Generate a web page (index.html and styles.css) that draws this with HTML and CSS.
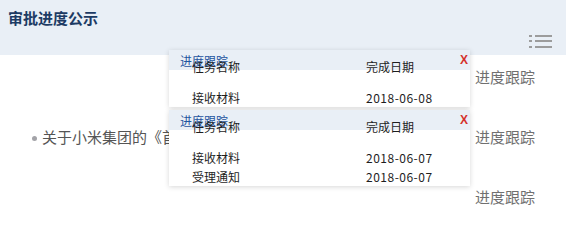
FILE: index.html
```html
<!DOCTYPE html>
<html lang="zh-CN">
<head>
<meta charset="utf-8">
<title>审批进度公示</title>
<link rel="stylesheet" href="styles.css">
</head>
<body>
<div class="page">
  <header class="top">
    <h1 class="title">审批进度公示</h1>
    <svg class="menu" width="23" height="14" viewBox="0 0 23 14" aria-hidden="true">
      <rect x="0" y="1" width="3" height="2" fill="#9c9c9c"/>
      <rect x="6" y="1" width="17" height="2" fill="#9c9c9c"/>
      <rect x="0" y="6" width="3" height="2" fill="#9c9c9c"/>
      <rect x="6" y="6" width="17" height="2" fill="#9c9c9c"/>
      <rect x="0" y="12" width="3" height="2" fill="#9c9c9c"/>
      <rect x="6" y="12" width="17" height="2" fill="#9c9c9c"/>
    </svg>
  </header>
  <ul class="list">
    <li class="row">
      <span class="name name-empty"></span>
      <a class="track">进度跟踪</a>
      <div class="popup">
        <div class="popup-bar">进度跟踪</div>
        <span class="close">X</span>
        <div class="thead"><span>任务名称</span><span>完成日期</span></div>
        <div class="tbody">
          <div class="trow"><span>接收材料</span><span>2018-06-08</span></div>
        </div>
      </div>
    </li>
    <li class="row">
      <span class="name">关于小米集团的《首次公开发行存托凭证》审批进度</span>
      <a class="track">进度跟踪</a>
      <div class="popup">
        <div class="popup-bar">进度跟踪</div>
        <span class="close">X</span>
        <div class="thead"><span>任务名称</span><span>完成日期</span></div>
        <div class="tbody">
          <div class="trow"><span>接收材料</span><span>2018-06-07</span></div>
          <div class="trow"><span>受理通知</span><span>2018-06-07</span></div>
        </div>
      </div>
    </li>
    <li class="row">
      <span class="name name-empty"></span>
      <a class="track">进度跟踪</a>
    </li>
  </ul>
</div>
</body>
</html>
```
FILE: styles.css
```css
* { box-sizing: border-box; }
html, body {
  margin: 0;
  padding: 0;
  background: #ffffff;
  font-family: "Noto Sans CJK SC", "Microsoft YaHei", sans-serif;
}
.page { width: 566px; }
.top {
  height: 55px;
  background: #e9eff6;
  padding: 8px 14px 0 8px;
  display: flex;
  flex-direction: column;
}
.title {
  margin: 0;
  font-size: 15px;
  line-height: 20px;
  font-weight: bold;
  color: #1d3b64;
}
.menu {
  align-self: flex-end;
  margin-top: 6px;
  display: block;
}
.list {
  list-style: none;
  margin: 0;
  padding: 0;
}
.row {
  position: relative;
  height: 42px;
  margin-bottom: 18px;
  display: flex;
  align-items: center;
  padding: 0 31px 0 32px;
  font-size: 15px;
}
.name {
  flex: 1;
  min-width: 0;
  margin-right: 12px;
  white-space: nowrap;
  overflow: hidden;
  color: #555555;
  display: flex;
  align-items: center;
}
.name::before {
  content: "";
  width: 5px;
  height: 5px;
  border-radius: 50%;
  background: #a3a3a8;
  margin-right: 5px;
  flex: none;
  transform: translateY(2px);
}
.name-empty::before { display: none; }
.track {
  color: #707070;
  white-space: nowrap;
  cursor: pointer;
}
.popup {
  position: absolute;
  left: 169px;
  top: -5px;
  width: 301px;
  background: #ffffff;
  box-shadow: 0 1px 5px rgba(0, 0, 0, 0.16);
  z-index: 2;
  font-size: 12px;
  color: #1e1e1e;
}
.popup-bar {
  height: 20px;
  background: #e9eff6;
  padding: 4px 0 0 11px;
  line-height: 14px;
  color: #1f55a0;
}
.close {
  position: absolute;
  right: 2px;
  top: 3px;
  font-family: "Liberation Sans", Arial, sans-serif;
  font-size: 12px;
  font-weight: bold;
  line-height: 14px;
  color: #d5322c;
}
.thead, .trow {
  display: grid;
  grid-template-columns: 174px 1fr;
  padding-left: 23px;
  line-height: 19px;
  height: 19px;
}
.thead { margin-top: -13px; position: relative; }
.tbody { margin-top: 12px; }
.trow span:last-child { letter-spacing: 0.5px; }
```
